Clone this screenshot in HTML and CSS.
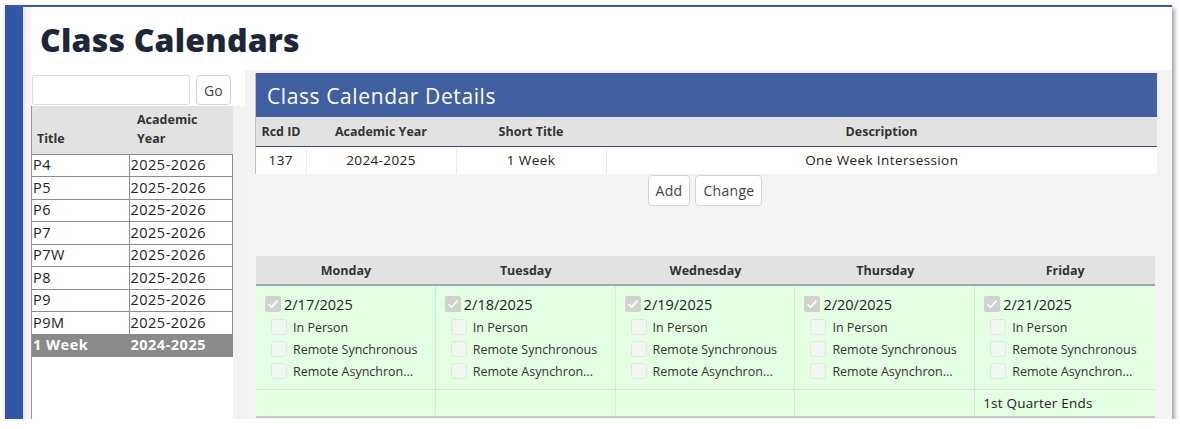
FILE: index.html
```html
<!DOCTYPE html>
<html>
<head>
<meta charset="utf-8">
<title>Class Calendars</title>
<link rel="stylesheet" href="styles.css">
</head>
<body>
<div class="window">
  <div class="sidebar"></div>
  <div class="strip"></div>
  <div class="main">
    <div class="titlebar"><h1 class="title">Class Calendars</h1></div>
    <div class="body">
      <div class="left">
        <div class="search">
          <input class="search-input" type="text">
          <button class="btn go">Go</button>
        </div>
        <div class="list-wrap">
          <div class="list">
            <table class="list-table">
              <thead>
                <tr><th class="c-title">Title</th><th class="c-year">Academic<br>Year</th></tr>
              </thead>
              <tbody>
                <tr><td>P4</td><td>2025-2026</td></tr>
                <tr><td>P5</td><td>2025-2026</td></tr>
                <tr><td>P6</td><td>2025-2026</td></tr>
                <tr><td>P7</td><td>2025-2026</td></tr>
                <tr><td>P7W</td><td>2025-2026</td></tr>
                <tr><td>P8</td><td>2025-2026</td></tr>
                <tr><td>P9</td><td>2025-2026</td></tr>
                <tr><td>P9M</td><td>2025-2026</td></tr>
                <tr class="selected"><td>1 Week</td><td>2024-2025</td></tr>
              </tbody>
            </table>
          </div>
        </div>
      </div>
      <div class="right">
        <section class="details">
          <div class="details-head">Class Calendar Details</div>
          <table class="details-table">
            <thead>
              <tr><th class="d-id">Rcd ID</th><th class="d-year">Academic Year</th><th class="d-short">Short Title</th><th>Description</th></tr>
            </thead>
            <tbody>
              <tr><td>137</td><td>2024-2025</td><td>1 Week</td><td>One Week Intersession</td></tr>
            </tbody>
          </table>
        </section>
        <div class="actions">
          <button class="btn">Add</button>
          <button class="btn">Change</button>
        </div>
        <div class="calendar">
          <div class="cal-row cal-head">
            <div class="cal-day">Monday</div>
            <div class="cal-day">Tuesday</div>
            <div class="cal-day">Wednesday</div>
            <div class="cal-day">Thursday</div>
            <div class="cal-day">Friday</div>
          </div>
          <div class="cal-row cal-body">
            <div class="cal-cell">
              <div class="date-row"><span class="cb checked"><svg viewBox="0 0 16 16" width="16" height="16"><path d="M3.5 8.2 L6.6 11.2 L12.5 4.6" fill="none" stroke="#fff" stroke-width="1.6"/></svg></span><span class="date">2/17/2025</span></div>
              <div class="opt"><span class="cb"></span><span>In Person</span></div>
              <div class="opt"><span class="cb"></span><span>Remote Synchronous</span></div>
              <div class="opt"><span class="cb"></span><span>Remote Asynchron...</span></div>
            </div>
            <div class="cal-cell">
              <div class="date-row"><span class="cb checked"><svg viewBox="0 0 16 16" width="16" height="16"><path d="M3.5 8.2 L6.6 11.2 L12.5 4.6" fill="none" stroke="#fff" stroke-width="1.6"/></svg></span><span class="date">2/18/2025</span></div>
              <div class="opt"><span class="cb"></span><span>In Person</span></div>
              <div class="opt"><span class="cb"></span><span>Remote Synchronous</span></div>
              <div class="opt"><span class="cb"></span><span>Remote Asynchron...</span></div>
            </div>
            <div class="cal-cell">
              <div class="date-row"><span class="cb checked"><svg viewBox="0 0 16 16" width="16" height="16"><path d="M3.5 8.2 L6.6 11.2 L12.5 4.6" fill="none" stroke="#fff" stroke-width="1.6"/></svg></span><span class="date">2/19/2025</span></div>
              <div class="opt"><span class="cb"></span><span>In Person</span></div>
              <div class="opt"><span class="cb"></span><span>Remote Synchronous</span></div>
              <div class="opt"><span class="cb"></span><span>Remote Asynchron...</span></div>
            </div>
            <div class="cal-cell">
              <div class="date-row"><span class="cb checked"><svg viewBox="0 0 16 16" width="16" height="16"><path d="M3.5 8.2 L6.6 11.2 L12.5 4.6" fill="none" stroke="#fff" stroke-width="1.6"/></svg></span><span class="date">2/20/2025</span></div>
              <div class="opt"><span class="cb"></span><span>In Person</span></div>
              <div class="opt"><span class="cb"></span><span>Remote Synchronous</span></div>
              <div class="opt"><span class="cb"></span><span>Remote Asynchron...</span></div>
            </div>
            <div class="cal-cell">
              <div class="date-row"><span class="cb checked"><svg viewBox="0 0 16 16" width="16" height="16"><path d="M3.5 8.2 L6.6 11.2 L12.5 4.6" fill="none" stroke="#fff" stroke-width="1.6"/></svg></span><span class="date">2/21/2025</span></div>
              <div class="opt"><span class="cb"></span><span>In Person</span></div>
              <div class="opt"><span class="cb"></span><span>Remote Synchronous</span></div>
              <div class="opt"><span class="cb"></span><span>Remote Asynchron...</span></div>
            </div>
          </div>
          <div class="cal-row cal-notes">
            <div class="note"></div>
            <div class="note"></div>
            <div class="note"></div>
            <div class="note"></div>
            <div class="note">1st Quarter Ends</div>
          </div>
        </div>
      </div>
    </div>
  </div>
</div>
</body>
</html>
```

FILE: styles.css
```css
* { box-sizing: border-box; }

html, body {
  margin: 0;
  padding: 0;
  background: #ffffff;
}

body {
  padding: 5px 0 0 5px;
  font-family: "Open Sans", "Liberation Sans", sans-serif;
  color: #222;
}

.window {
  display: flex;
  width: 1167px;
  height: 414px;
  border-top: 2px solid #3a5aa6;
  background: #fff;
  box-shadow: 2px 3px 5px rgba(0, 0, 0, 0.45);
  overflow: hidden;
}

.sidebar {
  width: 18px;
  flex: none;
  background: #3356a6;
}

.strip {
  width: 8px;
  flex: none;
  border-left: 2px solid #e4eaf6;
  background: #f3f3f3;
}

.main {
  flex: 1;
  display: flex;
  flex-direction: column;
  min-width: 0;
}

.titlebar {
  height: 63px;
  flex: none;
  padding-left: 9px;
  display: flex;
  align-items: center;
}

.title {
  margin: 0;
  font-size: 32px;
  font-weight: 800;
  color: #1d2738;
  letter-spacing: 0.2px;
  padding-top: 1px;
}

.body {
  flex: 1;
  display: flex;
  min-height: 0;
}

/* left list */
.left {
  width: 214px;
  flex: none;
  display: flex;
  flex-direction: column;
  padding-top: 5px;
}

.search {
  display: flex;
  gap: 6px;
  padding-left: 1px;
  height: 30px;
}

.search-input {
  width: 158px;
  height: 30px;
  border: 1px solid #dcdcdc;
  border-radius: 3px;
  background: #fff;
  margin: 0;
}

.btn {
  font-family: inherit;
  font-size: 14px;
  color: #444;
  background: #fff;
  border: 1px solid #d4d4d4;
  border-radius: 4px;
  height: 31px;
  padding: 0 7px;
  margin: 0;
  letter-spacing: 0.3px;
}

.go {
  width: 35px;
  height: 30px;
  padding: 0;
}

.list-wrap {
  flex: 1;
  margin-top: 1px;
  background: #f2f2f2;
  display: flex;
}

.list {
  width: 202px;
  background: #fff;
  border-left: 1px solid #9a9a9a;
}

.list-table {
  border-collapse: collapse;
  width: 201px;
  font-size: 14.5px;
  letter-spacing: 0.5px;
  color: #222;
}

.list-table th {
  background: #e2e2e2;
  font-size: 12.5px;
  font-weight: 700;
  color: #333;
  text-align: left;
  vertical-align: bottom;
  height: 48px;
  padding: 0 0 6px 5px;
  line-height: 19px;
  letter-spacing: 0;
}

.list-table .c-title { width: 97px; }
.list-table .c-year { padding-left: 8px; }

.list-table td {
  border: 1px solid #8c8c8c;
  height: 22.5px;
  padding: 0 0 0 1px;
  line-height: 20px;
}

.list-table td:first-child { border-left: none; }

.list-table tr.selected td {
  background: #8a8a8a;
  color: #fff;
  font-weight: 700;
  border-color: #8a8a8a;
  border-left: 1px solid #aaa;
}

.list-table tr.selected td:first-child { border-left: none; }

/* right */
.right {
  flex: 1;
  background: #f3f3f3;
  padding: 3px 15px 0 10px;
  display: flex;
  flex-direction: column;
  min-width: 0;
}

.details {
  border-left: 1px solid #b9bdc6;
  background: #fff;
}

.details-head {
  height: 44px;
  background: #4060a1;
  color: #fff;
  font-size: 21px;
  padding-left: 11px;
  display: flex;
  align-items: center;
  letter-spacing: 0.6px;
  padding-top: 1px;
}

.details-table {
  width: 100%;
  border-collapse: collapse;
  font-size: 13.5px;
}

.details-table th {
  background: #e2e2e2;
  font-weight: 700;
  font-size: 12.5px;
  color: #333;
  height: 29px;
  border-bottom: 1px solid #3d4f74;
  text-align: center;
}

.details-table .d-id { width: 50px; }
.details-table .d-year { width: 150px; }
.details-table .d-short { width: 150px; }

.details-table td {
  height: 28px;
  text-align: center;
  border-right: 1px solid #ebebeb;
  color: #222;
  letter-spacing: 0.4px;
}

.details-table td:last-child { border-right: none; }

.actions {
  display: flex;
  justify-content: center;
  gap: 5px;
  padding-top: 1px;
  margin-bottom: 50px;
  padding-right: 2px;
}

/* calendar */
.calendar {
  margin-left: 1px;
  margin-right: 2px;
  border-bottom: 2px solid #c6c6c6;
}

.cal-row {
  display: grid;
  grid-template-columns: repeat(5, 1fr);
}

.cal-head {
  background: #e2e2e2;
  height: 30px;
  border-bottom: 2px solid #a0a5b3;
}

.cal-day {
  display: flex;
  align-items: center;
  justify-content: center;
  font-size: 12.5px;
  font-weight: 700;
  color: #333;
}

.cal-body {
  background: #e5ffe3;
}

.cal-cell {
  border-right: 1px solid #d3ecd1;
  padding: 10px 0 10px 9px;
  display: flex;
  flex-direction: column;
  gap: 6px;
}

.cal-cell:last-child, .note:last-child { border-right: none; }

.date-row {
  display: flex;
  align-items: center;
  gap: 3px;
  height: 16px;
  font-size: 14.5px;
  color: #222;
  margin-bottom: 1px;
}

.opt {
  display: flex;
  align-items: center;
  gap: 6px;
  height: 16px;
  padding-left: 6px;
  font-size: 12.5px;
  color: #333;
}

.cb {
  width: 16px;
  height: 16px;
  flex: none;
  border: 1px solid #dfe5df;
  border-radius: 3px;
  background: #f1f6f0;
  display: inline-block;
}

.cb.checked {
  border: none;
  background: #cfd2cf;
  border-radius: 2px;
}

.cb svg { display: block; }

.cal-notes {
  background: #e5ffe3;
  border-top: 1px solid #d3e6d1;
  height: 27px;
}

.note {
  border-right: 1px solid #d3ecd1;
  display: flex;
  align-items: center;
  padding-left: 8px;
  font-size: 13.5px;
  color: #222;
  letter-spacing: 0.2px;
}
```
